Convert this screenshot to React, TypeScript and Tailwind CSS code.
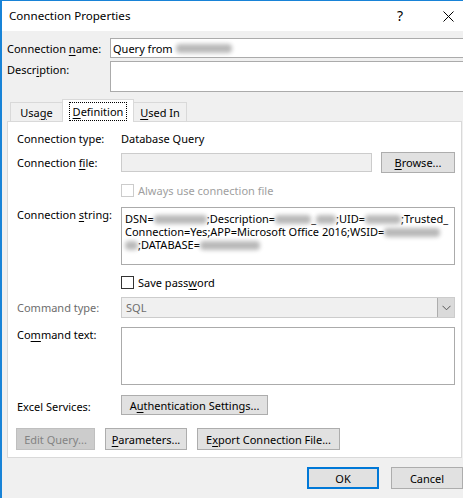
import React from "react";

const FONT = { fontFamily: '"Noto Sans", "Open Sans", sans-serif' };

// access-key underline
function K({ children }: { children: React.ReactNode }) {
  return <span className="underline underline-offset-[2px]">{children}</span>;
}

// blurred (redacted) text chunk
function Blur({ w }: { w: number }) {
  return (
    <span
      className="inline-block h-[9px] bg-[#b9b9b9] blur-[2px] align-[-1px] rounded-sm"
      style={{ width: w }}
    />
  );
}

function Btn({
  children,
  className = "",
  disabled = false,
}: {
  children: React.ReactNode;
  className?: string;
  disabled?: boolean;
}) {
  return (
    <div
      className={`flex items-center justify-center border ${
        disabled
          ? "bg-[#cccccc] border-[#bfbfbf] text-[#838383]"
          : "bg-[#e1e1e1] border-[#adadad] text-black"
      } ${className}`}
    >
      {children}
    </div>
  );
}

export default function App() {
  return (
    <div
      className="w-[463px] h-[498px] overflow-hidden bg-[#f0f0f0] border-l-2 border-t border-[#1883d7] text-[11px] leading-none text-black"
      style={FONT}
    >
      {/* Title bar */}
      <div className="h-[30px] bg-white flex items-center pl-[7px]">
        <span className="text-[11.6px]">Connection Properties</span>
        <span className="ml-auto text-[14px] mr-[40px]">?</span>
        <svg width="11" height="11" viewBox="0 0 11 11" className="mr-[9px]">
          <path d="M0.5 0.5 L10.5 10.5 M10.5 0.5 L0.5 10.5" stroke="#000" strokeWidth="1" />
        </svg>
      </div>

      {/* Name / Description */}
      <div className="pl-[5px] pt-[7px]">
        <div className="flex items-center h-[20px]">
          <span className="w-[103px]">
            Connection <K>n</K>ame:
          </span>
          <div className="flex-1 h-[20px] bg-white border border-[#ababab] border-r-0 flex items-center pl-[2px] gap-[3px]">
            Query from <Blur w={56} />
          </div>
        </div>
        <div className="flex items-start mt-[3px]">
          <span className="w-[103px] pt-[3px]">
            Descr<K>i</K>ption:
          </span>
          <div className="flex-1 h-[31px] bg-white border border-[#ababab] border-r-0" />
        </div>
      </div>

      {/* Tabs */}
      <div className="flex items-end h-[22px] mt-[7px] pl-[8px] relative z-10">
        <div className="h-[19px] w-[52px] flex items-center justify-center border-t border-l border-[#d9d9d9]">
          Usa<K>g</K>e
        </div>
        <div className="h-[23px] w-[72px] mb-[-1px] bg-white border border-b-0 border-[#d9d9d9] flex items-center justify-center">
          <span className="outline outline-1 outline-dotted outline-black px-[3px] py-[3px]">
            <K>D</K>efinition
          </span>
        </div>
        <div className="h-[19px] w-[53px] flex items-center justify-center border-t border-r border-[#d9d9d9]">
          <K>U</K>sed In
        </div>
      </div>

      {/* Tab panel */}
      <div className="ml-[5px] mr-[1px] h-[337px] bg-white border border-[#d9d9d9] pl-[9px] pr-[6px] pt-[8px]">
        {/* Connection type */}
        <div className="flex items-center h-[16px]">
          <span className="w-[104px]">Connection type:</span>
          <span>Database Query</span>
        </div>

        {/* Connection file */}
        <div className="flex items-center mt-[6px] h-[21px]">
          <span className="w-[104px]">
            Connection <K>f</K>ile:
          </span>
          <div className="w-[251px] h-[19px] bg-[#f0f0f0] border border-[#cccccc]" />
          <Btn className="ml-[9px] w-[74px] h-[21px]">
            <span>
              <K>B</K>rowse...
            </span>
          </Btn>
        </div>

        {/* Always use connection file */}
        <div className="flex items-center mt-[11px] h-[13px] pl-[104px]">
          <div className="w-[13px] h-[13px] border border-[#cccccc] bg-white" />
          <span className="ml-[4px] text-[#a0a0a0]">Always use connection file</span>
        </div>

        {/* Connection string */}
        <div className="flex items-start mt-[10px]">
          <span className="w-[104px] pt-[2px]">
            Connection <K>s</K>tring:
          </span>
          <div className="flex-1 h-[58px] bg-white border border-[#ababab] pl-[3px] pt-[4px] leading-[13px] whitespace-nowrap overflow-hidden">
            <div>
              DSN=<Blur w={53} />;Description=<Blur w={36} />_<Blur w={20} />;UID=
              <Blur w={36} />;Trusted_
            </div>
            <div>
              Connection=Yes;APP=Microsoft Office 2016;WSID=
              <Blur w={56} />
            </div>
            <div>
              <Blur w={13} />;DATABASE=<Blur w={60} />
            </div>
          </div>
        </div>

        {/* Save password */}
        <div className="flex items-center mt-[10px] h-[14px] pl-[104px]">
          <div className="w-[13px] h-[13px] border border-[#333333] bg-white" />
          <span className="ml-[4px]">
            Save pass<K>w</K>ord
          </span>
        </div>

        {/* Command type */}
        <div className="flex items-center mt-[8px] h-[21px]">
          <span className="w-[104px] text-[#6d6d6d]">Command type:</span>
          <div className="flex-1 h-[21px] bg-[#f0f0f0] border border-[#cccccc] flex items-center">
            <span className="pl-[4px] text-[#6d6d6d]">SQL</span>
            <div className="ml-auto w-[17px] h-[19px] bg-[#dadada] border-l border-[#adadad] flex items-center justify-center">
              <svg width="9" height="6" viewBox="0 0 9 6">
                <path d="M0.5 0.8 L4.5 4.8 L8.5 0.8" stroke="#555" strokeWidth="1" fill="none" />
              </svg>
            </div>
          </div>
        </div>

        {/* Command text */}
        <div className="flex items-start mt-[9px]">
          <span className="w-[104px] pt-[2px]">
            Co<K>m</K>mand text:
          </span>
          <div className="flex-1 h-[58px] bg-white border border-[#ababab]" />
        </div>

        {/* Excel Services */}
        <div className="flex items-center mt-[10px] h-[20px]">
          <span className="w-[104px] pt-[2px]">Excel Services:</span>
          <Btn className="w-[147px] h-[20px]">
            <span>
              A<K>u</K>thentication Settings...
            </span>
          </Btn>
        </div>

        {/* Bottom buttons */}
        <div className="flex items-center mt-[13px] h-[22px] -ml-[1px]">
          <Btn disabled className="w-[79px] h-[22px]">
            Edit Query...
          </Btn>
          <Btn className="ml-[10px] w-[82px] h-[22px]">
            <span>
              <K>P</K>arameters...
            </span>
          </Btn>
          <Btn className="ml-[10px] w-[143px] h-[22px]">
            <span>
              E<K>x</K>port Connection File...
            </span>
          </Btn>
        </div>
      </div>

      {/* OK / Cancel */}
      <div className="flex mt-[9px] pl-[305px]">
        <div className="w-[72px] h-[22px] bg-[#e1e1e1] border-2 border-[#0078d7] flex items-center justify-center">
          OK
        </div>
        <Btn className="ml-[12px] w-[72px] h-[22px]">Cancel</Btn>
      </div>
    </div>
  );
}
